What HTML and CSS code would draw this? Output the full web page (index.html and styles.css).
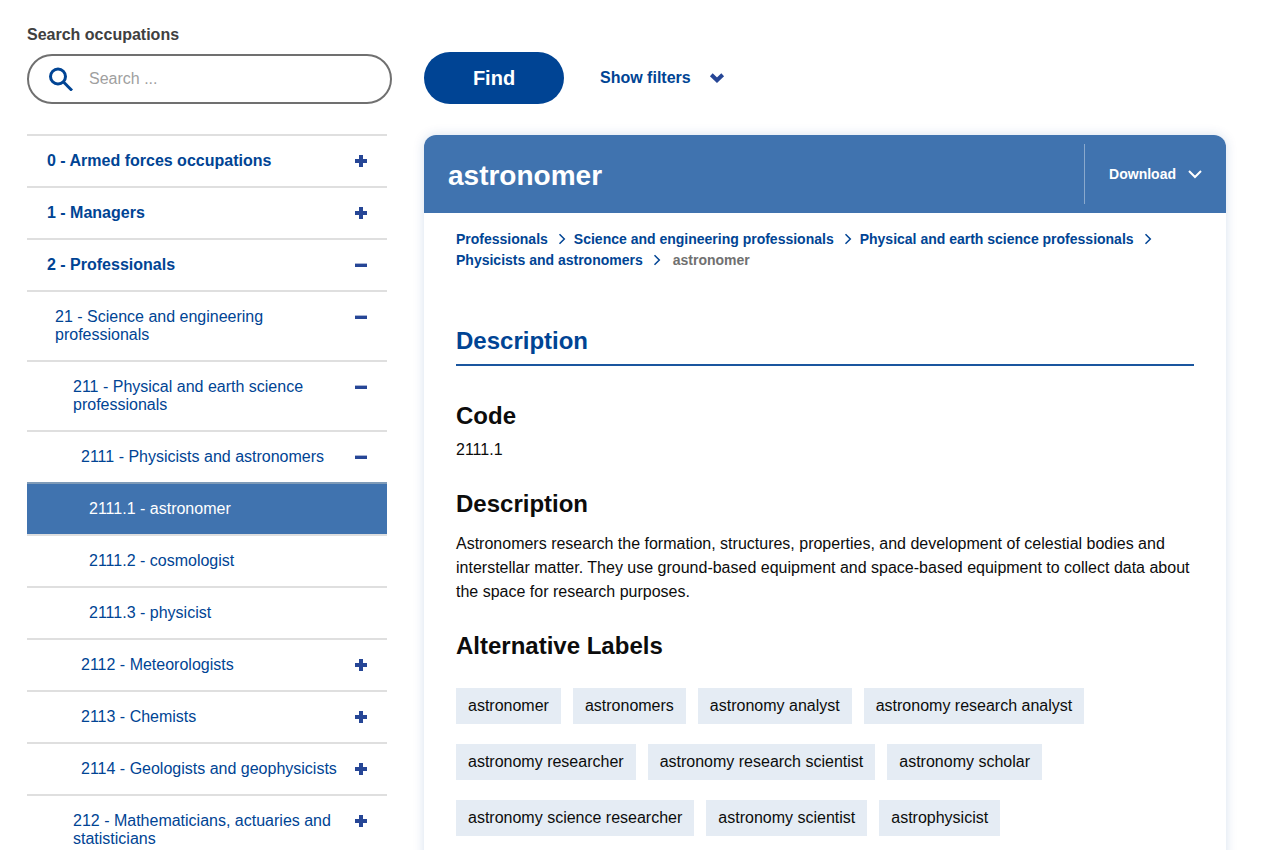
FILE: index.html
```html
<!DOCTYPE html>
<html lang="en">
<head>
<meta charset="utf-8">
<meta name="viewport" content="width=device-width, initial-scale=1">
<title>astronomer - Occupations</title>
<link rel="stylesheet" href="styles.css">
</head>
<body>
<svg class="sprite" aria-hidden="true">
  <symbol id="plus" viewBox="0 0 12 12"><path d="M0 6h12M6 0v12" stroke="currentColor" stroke-width="4"/></symbol>
  <symbol id="minus" viewBox="0 0 12 12"><path d="M0 6.300h12" stroke="currentColor" stroke-width="3.400"/></symbol>
  <symbol id="crumb" viewBox="0 0 8 12"><path d="M1.500 1.200L6.300 6L1.500 10.800" fill="none" stroke="currentColor" stroke-width="1.500"/></symbol>
</svg>
<div class="page">
  <form class="search" role="search">
    <div class="search-field">
      <label class="search-label" for="q">Search occupations</label>
      <div class="search-box">
        <svg class="search-icon" viewBox="0 0 24 24" aria-hidden="true"><circle cx="9" cy="9.500" r="7.500"/><path d="M14 14.500l9 9"/></svg>
        <input class="search-input" id="q" type="text" placeholder="Search ...">
      </div>
    </div>
    <div class="search-actions">
      <button class="find" type="submit">Find</button>
      <button class="filters" type="button">Show filters
        <svg class="filters-icon" viewBox="0 0 14 10" aria-hidden="true"><path d="M1.300 1.800L7 7.300L12.700 1.800"/></svg>
      </button>
    </div>
  </form>
  <div class="columns">
    <nav class="tree" aria-label="Occupations">
      <div class="row top"><a class="node" href="#">0 - Armed forces occupations</a><button class="toggle" type="button" aria-label="Expand"><svg><use href="#plus"/></svg></button></div>
      <div class="row top"><a class="node" href="#">1 - Managers</a><button class="toggle" type="button" aria-label="Expand"><svg><use href="#plus"/></svg></button></div>
      <div class="row top"><a class="node" href="#">2 - Professionals</a><button class="toggle" type="button" aria-label="Collapse"><svg><use href="#minus"/></svg></button></div>
      <div class="row level-2"><a class="node" href="#">21 - Science and engineering professionals</a><button class="toggle" type="button" aria-label="Collapse"><svg><use href="#minus"/></svg></button></div>
      <div class="row level-3"><a class="node" href="#">211 - Physical and earth science professionals</a><button class="toggle" type="button" aria-label="Collapse"><svg><use href="#minus"/></svg></button></div>
      <div class="row level-4"><a class="node" href="#">2111 - Physicists and astronomers</a><button class="toggle" type="button" aria-label="Collapse"><svg><use href="#minus"/></svg></button></div>
      <div class="row level-5 selected"><a class="node" href="#" aria-current="page">2111.1 - astronomer</a></div>
      <div class="row level-5"><a class="node" href="#">2111.2 - cosmologist</a></div>
      <div class="row level-5"><a class="node" href="#">2111.3 - physicist</a></div>
      <div class="row level-4"><a class="node" href="#">2112 - Meteorologists</a><button class="toggle" type="button" aria-label="Expand"><svg><use href="#plus"/></svg></button></div>
      <div class="row level-4"><a class="node" href="#">2113 - Chemists</a><button class="toggle" type="button" aria-label="Expand"><svg><use href="#plus"/></svg></button></div>
      <div class="row level-4"><a class="node" href="#">2114 - Geologists and geophysicists</a><button class="toggle" type="button" aria-label="Expand"><svg><use href="#plus"/></svg></button></div>
      <div class="row level-3"><a class="node" href="#">212 - Mathematicians, actuaries and statisticians</a><button class="toggle" type="button" aria-label="Expand"><svg><use href="#plus"/></svg></button></div>
    </nav>
    <main class="card">
      <header class="card-header">
        <h1 class="title">astronomer</h1>
        <button class="download" type="button">Download
          <svg class="download-icon" viewBox="0 0 14 10" aria-hidden="true"><path d="M1 2L7 8L13 2"/></svg>
        </button>
      </header>
      <div class="card-body">
        <nav class="crumbs" aria-label="Breadcrumb">
          <span class="crumb"><a href="#">Professionals</a><svg><use href="#crumb"/></svg></span>
          <span class="crumb"><a href="#">Science and engineering professionals</a><svg><use href="#crumb"/></svg></span>
          <span class="crumb"><a href="#">Physical and earth science professionals</a><svg><use href="#crumb"/></svg></span>
          <span class="crumb"><a href="#">Physicists and astronomers</a><svg><use href="#crumb"/></svg></span>
          <span class="crumb current" aria-current="page">astronomer</span>
        </nav>
        <h2 class="section-title">Description</h2>
        <h3 class="heading code-heading">Code</h3>
        <p class="text code">2111.1</p>
        <h3 class="heading">Description</h3>
        <p class="text">Astronomers research the formation, structures, properties, and development of celestial bodies and interstellar matter. They use ground-based equipment and space-based equipment to collect data about the space for research purposes.</p>
        <h3 class="heading">Alternative Labels</h3>
        <ul class="tags">
          <li class="tag">astronomer</li>
          <li class="tag">astronomers</li>
          <li class="tag">astronomy analyst</li>
          <li class="tag">astronomy research analyst</li>
          <li class="tag">astronomy researcher</li>
          <li class="tag">astronomy research scientist</li>
          <li class="tag">astronomy scholar</li>
          <li class="tag">astronomy science researcher</li>
          <li class="tag">astronomy scientist</li>
          <li class="tag">astrophysicist</li>
        </ul>
      </div>
    </main>
  </div>
</div>
</body>
</html>
```
FILE: styles.css
```css
* { box-sizing: border-box; }

body {
  margin: 0;
  background: #fff;
  color: #0c0c0c;
  font: 16px/24px "Liberation Sans", Arial, sans-serif;
}

h1, h2, h3, p, ul { margin: 0; padding: 0; }
a { color: inherit; text-decoration: none; }
button { border: 0; padding: 0; background: none; color: inherit; font: inherit; cursor: pointer; }
.sprite { display: none; }

.page { padding: 24px 45px 0 27px; }

.search, .columns {
  display: grid;
  grid-template-columns: 365px minmax(0, 1fr);
  column-gap: 32px;
}

.search-label {
  display: block;
  margin-bottom: 8px;
  color: #404040;
  font-weight: bold;
  line-height: 22px;
}

.search-box {
  display: flex;
  align-items: center;
  gap: 16px;
  height: 50px;
  padding: 0 20px;
  border: 2px solid #707070;
  border-radius: 25px;
}

.search-icon {
  flex: none;
  width: 24px;
  height: 24px;
  fill: none;
  stroke: #004494;
  stroke-width: 3;
}

.search-input {
  flex: 1;
  min-width: 0;
  padding: 0;
  border: 0;
  outline: 0;
  background: none;
  color: #404040;
  font: inherit;
}
.search-input::placeholder { color: #9f9f9f; }

.search-actions { display: flex; align-items: flex-end; gap: 36px; }

.find {
  width: 140px;
  height: 52px;
  border-radius: 26px;
  background: #004494;
  color: #fff;
  font-size: 20px;
  font-weight: bold;
}

.filters {
  display: flex;
  align-items: center;
  gap: 19px;
  height: 52px;
  color: #004494;
  font-weight: bold;
}
.filters-icon { width: 14px; height: 10px; overflow: visible; fill: none; stroke: #264696; stroke-width: 4; }

.tree { margin: 30px 5px 0 0; }

.row {
  display: flex;
  align-items: flex-start;
  gap: 16px;
  padding: 16px 20px;
  border-top: 2px solid #dfdfdf;
  color: #004494;
  line-height: 18px;
}
.top { font-weight: bold; }
.level-2 { padding-left: 28px; }
.level-3 { padding-left: 46px; }
.level-4 { padding-left: 54px; }
.level-5 { padding-left: 62px; }
.selected { border-color: #7f9bb8; background: #4073af; color: #fff; }
.node { flex: 1; }

.toggle { flex: none; width: 12px; height: 18px; color: #264696; }
.toggle svg { display: block; width: 12px; height: 12px; margin: 3px 0; }

.card {
  margin-top: 31px;
  border-radius: 12px 12px 0 0;
  background: #fff;
  box-shadow: 0 0 12px rgba(0, 68, 148, 0.16);
}

.card-header {
  display: flex;
  align-items: center;
  justify-content: space-between;
  min-height: 78px;
  padding: 8px 24px;
  border-radius: 12px 12px 0 0;
  background: #4073af;
  color: #fff;
}
.title { padding-top: 4px; font-size: 28px; line-height: 36px; }

.download {
  display: flex;
  align-items: center;
  gap: 12px;
  height: 60px;
  padding-left: 24px;
  border-left: 1px solid #8aa9cd;
  font-size: 14px;
  font-weight: bold;
}
.download-icon { width: 14px; height: 10px; fill: none; stroke: #fff; stroke-width: 2; }

.card-body { padding: 16px 32px 48px; }

.crumbs {
  display: flex;
  flex-wrap: wrap;
  column-gap: 8px;
  color: #004494;
  font-size: 14px;
  font-weight: bold;
  line-height: 21px;
}
.crumb { display: flex; align-items: center; gap: 10px; }
.crumb svg { width: 8px; height: 12px; margin-bottom: 1px; }
.current { padding-left: 4px; color: #707070; }

.section-title {
  margin-top: 56px;
  padding-bottom: 9px;
  border-bottom: 2px solid #1a569f;
  color: #004494;
  font-size: 24px;
  line-height: 28px;
}

.heading { margin: 28px 0 14px; font-size: 24px; line-height: 28px; }
.code-heading { margin: 36px 0 8px; }

.tags { display: flex; flex-wrap: wrap; gap: 20px 12px; margin-top: 28px; list-style: none; }
.tag { padding: 6px 12px; background: #e5ecf4; }
```
